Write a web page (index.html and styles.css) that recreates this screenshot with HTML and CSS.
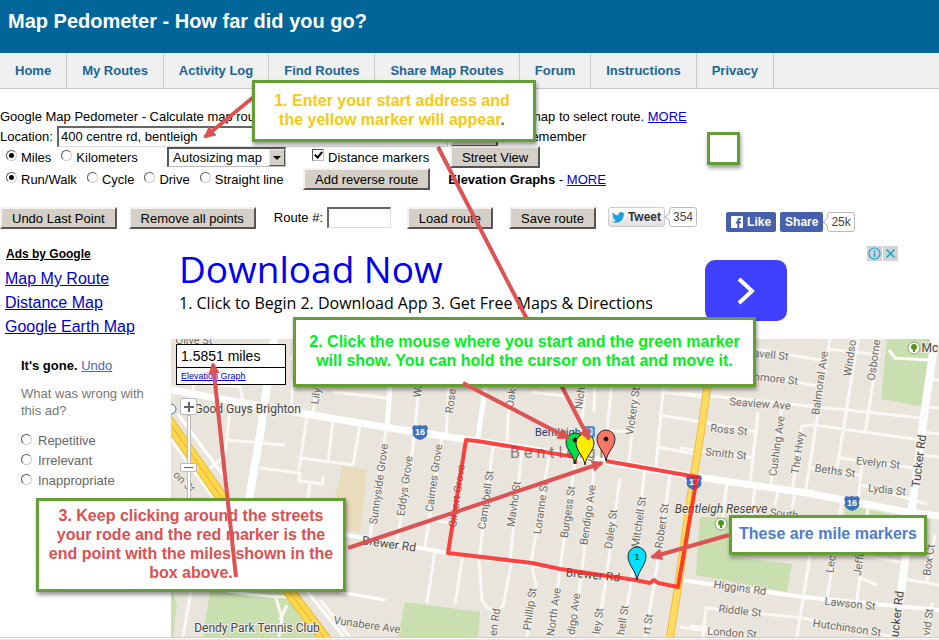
FILE: index.html
```html
<!DOCTYPE html>
<html lang="en">
<head>
  <meta charset="UTF-8">
  <meta name="viewport" content="width=device-width, initial-scale=1.0">
  <title>Map Pedometer - How far did you go?</title>
  <link rel="stylesheet" href="styles.css">
</head>
<body>

<div class="page">
  <header>
    <h1>Map Pedometer - How far did you go?</h1>
  </header>

  <nav>
    <a href="#">Home</a>
    <a href="#">My Routes</a>
    <a href="#">Activity Log</a>
    <a href="#">Find Routes</a>
    <a href="#">Share Map Routes</a>
    <a href="#">Forum</a>
    <a href="#">Instructions</a>
    <a href="#">Privacy</a>
  </nav>

  <form class="controls">
    <div class="row">
      <span class="intro">Google Map Pedometer - Calculate map routes.</span>
      <span>map to select route. <a href="#">MORE</a></span>
    </div>
    <div class="row">
      <label class="location-label" for="location">Location:</label>
      <input type="text" id="location" value="400 centre rd, bentleigh">
      <button type="button" class="find">Find</button>
      <label class="option remember"><input type="checkbox">Remember</label>
    </div>
    <div class="row tall">
      <div class="options units">
        <label class="option"><input type="radio" name="unit" checked>Miles</label>
        <label class="option"><input type="radio" name="unit">Kilometers</label>
      </div>
      <div class="select-box">
        <select aria-label="Map size">
          <option>Autosizing map</option>
        </select>
        <span class="select-arrow"></span>
      </div>
      <label class="option markers"><input type="checkbox" checked>Distance markers</label>
      <button type="button">Street View</button>
    </div>
    <div class="row tall">
      <div class="options modes">
        <label class="option"><input type="radio" name="mode" checked>Run/Walk</label>
        <label class="option"><input type="radio" name="mode">Cycle</label>
        <label class="option"><input type="radio" name="mode">Drive</label>
        <label class="option"><input type="radio" name="mode">Straight line</label>
      </div>
      <button type="button">Add reverse route</button>
      <span class="elevation"><b>Elevation Graphs</b> - <a href="#">MORE</a></span>
    </div>
    <div class="row actions">
      <button type="button">Undo Last Point</button>
      <button type="button">Remove all points</button>
      <label class="route-label" for="route">Route #:</label>
      <input type="text" id="route">
      <button type="button" class="load">Load route</button>
      <button type="button" class="save">Save route</button>
      <button type="button" class="tweet">
        <svg width="13" height="11" viewBox="0 0 24 20"><path fill="#1da1dd" d="M24 2.4a10 10 0 0 1-2.8.8A5 5 0 0 0 23.300.500a10 10 0 0 1-3.100 1.200 4.900 4.900 0 0 0-8.400 4.500A14 14 0 0 1 1.700 1a4.900 4.900 0 0 0 1.500 6.600 5 5 0 0 1-2.200-.6 4.900 4.900 0 0 0 3.900 4.900 5 5 0 0 1-2.200.1 4.900 4.900 0 0 0 4.600 3.400A10 10 0 0 1 0 17.500 14 14 0 0 0 21.500 5.100 10 10 0 0 0 24 2.400z"/></svg>
        Tweet
      </button>
      <span class="count">354</span>
      <div class="facebook">
        <button type="button" class="fb">
          <svg width="12" height="12" viewBox="0 0 12 12"><rect width="12" height="12" rx="1" fill="#fff"/><path fill="#3f5fae" d="M6.300 12V7.400H4.800V5.600h1.500V4.300C6.300 2.700 7.200 2 8.600 2h1.500v1.700H9.200c-.7 0-.9.3-.9.900v1h1.800l-.3 1.800H8.300V12z"/></svg>
          Like
        </button>
        <button type="button" class="fb">Share</button>
        <span class="count">25k</span>
      </div>
    </div>
  </form>

  <div class="content">
    <aside>
      <a class="ads-title" href="#">Ads by Google</a>
      <a href="#">Map My Route</a>
      <a href="#">Distance Map</a>
      <a href="#">Google Earth Map</a>
      <div class="feedback">
        <p class="gone"><b>It's gone.</b> <a href="#">Undo</a></p>
        <p class="question">What was wrong with this ad?</p>
        <label class="option"><input type="radio" name="reason">Repetitive</label>
        <label class="option"><input type="radio" name="reason">Irrelevant</label>
        <label class="option"><input type="radio" name="reason">Inappropriate</label>
      </div>
    </aside>

    <main>
      <div class="banner">
        <div class="banner-text">
          <a class="banner-title" href="#">Download Now</a>
          <p>1. Click to Begin 2. Download App 3. Get Free Maps &amp; Directions</p>
        </div>
        <button type="button" class="banner-go" aria-label="Download">
          <svg width="18" height="28" viewBox="0 0 18 28"><path d="M2 2l13 12L2 26" fill="none" stroke="#fff" stroke-width="4"/></svg>
        </button>
        <div class="ad-icons">
          <svg width="15" height="15" viewBox="0 0 15 15"><rect width="15" height="15" fill="#d0d4d6"/><circle cx="7.500" cy="7.500" r="5.500" fill="none" stroke="#1ba3c6" stroke-width="1.200"/><path d="M7.500 6.500v4.500M7.500 4v1.500" stroke="#1ba3c6" stroke-width="1.500"/></svg>
          <svg width="15" height="15" viewBox="0 0 15 15"><rect width="15" height="15" fill="#d0d4d6"/><path d="M3.500 3.500l8 8M11.500 3.500l-8 8" stroke="#1ba3c6" stroke-width="1.500"/></svg>
        </div>
      </div>

      <div class="map">
        <svg class="map-canvas" viewBox="171 339 768 298" preserveAspectRatio="xMinYMin slice">
          <rect x="171" y="339" width="2000" height="298" fill="#e9e5dc"/>

          <!-- parks -->
          <g fill="#c9dfaf">
            <path d="M887 339h43l-5 68-44-8z"/>
            <path d="M700 517l30 0 0 40 62 7-5 28-91-17z"/>
            <path d="M211 585l82 8 36 44H203z"/>
            <path d="M171 590l6 14-4 33h-2z"/>
            <path d="M405 602l75 10-2 25h-80z"/>
            <path d="M845 505l20 4 25 5v3h-45z"/>
          </g>
          <path d="M343 465l24 5-7 62-32-6z" fill="#e8dcbc"/>

          <!-- small streets -->
          <g class="minor">
            <path d="M452 339L446 436M512 339L507 442M590 339L579 450M596 339L594 412M616 339L605 452M641 339L629 462M668 339L656 466"/>
            <path d="M531 392l34 4M607 430l22 2M660 392l43 5M659 415l42 7M657 447l38 7"/>
            <path d="M317 385L313 414M293 380L291 410M424 339L412 455L396 545M386 430L370 537M442 437L425 547"/>
            <path d="M307 416L299 470M300 458l54 7M360 425L353 466M333 420L328 462M260 468l40 5-1 8 24 3v-8M310 483l-3 20"/>
            <path d="M227 440l58 5M230 410L225 455L210 469M333 392l54 6M171 440l44 60M195 380l-4 20M220 385l20 2 3 14M290 358l22 3"/>
            <path d="M493 446L479 560L482 600Q492 618 503 606L512 560M522 451L510 560M549 457L531 563L536 585L527 637"/>
            <path d="M575 462L560 569L551 637M595 464L582 570L573 637M620 478L607 573L597 637M645 468L632 577L622 637M670 475L655 580L645 637"/>
            <path d="M435 551L427 603M463 555L455 604M430 520l20 3"/>
            <path d="M830 339L805 494M858 339L837 468M880 339L865 434M827 349l54 6M720 343l105 18M720 368l97 18"/>
            <path d="M680 393l62 6 180 19M680 418l78 14M758 412L750 485M680 448l72 10M782 408L770 490M792 492L802 426L814 425L922 440"/>
            <path d="M840 458l73 10M810 468l52 8M862 462L858 503M862 485l65 19M931 379l8 1M926 407l13 1M922 432l17 2M920 455l19 2"/>
            <path d="M727 483L722 520M755 488L751 520M778 490l-3 15M795 493l-3 15M814 530L797 637M842 500L827 600M868 508L857 600M840 551l60 11M860 578l17 7"/>
            <path d="M703 637L706 608L803 618L893 637M680 627l80 12M935 535L927 582M905 579l34 6M932 603l-4 34M690 626l18 2"/>
            <path d="M191 590L183 637M276 598l6 20-3 19M287 605l-7 15M320 600l30 37"/>
          </g>

          <!-- wider streets -->
          <g fill="none" stroke="#fff">
            <path d="M492 339L478 438M394 339L387 426" stroke-width="5"/>
            <path d="M330 532L448 553L560 569L678 587M681 580L803 597L939 610" stroke-width="4"/>
            <path d="M203 585Q240 596 292 597M340 592L385 600" stroke-width="3"/>
            <path d="M274 339L260 435L242 540" stroke-width="8"/>
            <path d="M935 339L925 408L913 500L895 637" stroke-width="8"/>
            <path d="M171 390L300 413L390 428L463 439L603 461L690 476L807 493L907 512L939 516" stroke-width="7"/>
            <path d="M889 350l6 8 34 2" stroke-width="3"/>
          </g>

          <!-- highways -->
          <g fill="none">
            <path d="M178 414L228 482M302 585L344 637" stroke="#fff" stroke-width="3"/>
            <path d="M166 418L222 498L288 590L326 640" stroke="#efb92e" stroke-width="12"/>
            <path d="M166 418L222 498L288 590L326 640" stroke="#ffd84c" stroke-width="10"/>
            <path d="M166 418L222 498L288 590L326 640" stroke="#e8a92c"/>
            <path d="M714 339L701 432L693 480L678 587L670 637" stroke="#f0bb42" stroke-width="8"/>
            <path d="M714 339L701 432L693 480L678 587L670 637" stroke="#ffdb60" stroke-width="6"/>
          </g>

          <!-- street names -->
          <g class="names">
            <text transform="translate(316 396) rotate(-82)">Lily</text>
            <text transform="translate(418 391) rotate(-82)">Wr</text>
            <text transform="translate(451 401) rotate(-82)">Rose</text>
            <text transform="translate(511 398) rotate(-82)">Oak</text>
            <text transform="translate(580 398) rotate(-82)">Nich</text>
            <text transform="translate(633 411) rotate(-82)">Vickery St</text>
            <text transform="translate(820 383) rotate(-82)">Balmoral Ave</text>
            <text transform="translate(850 358) rotate(-82)">Windso</text>
            <text transform="translate(874 360) rotate(-82)">Osborne</text>
            <text transform="translate(777 446) rotate(-82)">Cushing Ave</text>
            <text transform="translate(798 453) rotate(-82)">The Hwy</text>
            <text transform="translate(379 484) rotate(-82)">Sunnyside Grove</text>
            <text transform="translate(405 486) rotate(-82)">Eddys Grove</text>
            <text transform="translate(434 478) rotate(-82)">Cairnes Grove</text>
            <text transform="translate(457 496) rotate(-82)">Gilbert Grove</text>
            <text transform="translate(486 500) rotate(-82)">Campbell St</text>
            <text transform="translate(514 504) rotate(-82)">Mavho St</text>
            <text transform="translate(541 508) rotate(-82)">Loranne St</text>
            <text transform="translate(568 512) rotate(-82)">Burgess St</text>
            <text transform="translate(588 515) rotate(-82)">Bendigo Ave</text>
            <text transform="translate(611 529) rotate(-82)">Daley St</text>
            <text transform="translate(639 522) rotate(-82)">Mitchell St</text>
            <text transform="translate(662 526) rotate(-82)">Robert St</text>
            <text transform="translate(530 609) rotate(-82)">Phillip St</text>
            <text transform="translate(554 612) rotate(-82)">North Ave</text>
            <text transform="translate(574 614) rotate(-82)">digo Ave</text>
            <text transform="translate(598 621) rotate(-82)">ley St</text>
            <text transform="translate(623 620) rotate(-82)">hell St</text>
            <text transform="translate(648 624) rotate(-82)">rt St</text>
            <text transform="translate(495 622) rotate(-82)">en Rd</text>
            <text transform="translate(831 564) rotate(-82)">Lec</text>
            <text transform="translate(859 564) rotate(-82)">Jeffr</text>
            <text transform="translate(929 560) rotate(-82)">Box Ct</text>
            <text transform="translate(928 622) rotate(-82)">vid St</text>
            <text transform="translate(184 482) rotate(45)">on St</text>
            <text transform="translate(194 340)">Olive St</text>
            <text transform="translate(771 355) rotate(6)">avell St</text>
            <text transform="translate(776 379) rotate(6)">hmore St</text>
            <text transform="translate(760 404) rotate(4)">Seaview Ave</text>
            <text transform="translate(729 430) rotate(6)">Ross St</text>
            <text transform="translate(726 454) rotate(6)">Smith St</text>
            <text transform="translate(878 463) rotate(6)">Evelyn St</text>
            <text transform="translate(835 471) rotate(8)">Beths St</text>
            <text transform="translate(887 490) rotate(6)">Lydia St</text>
            <text transform="translate(784 514) rotate(6)">South</text>
            <text transform="translate(740 588) rotate(8)">Higgins Rd</text>
            <text transform="translate(740 611) rotate(6)">Riddle St</text>
            <text transform="translate(732 633) rotate(4)">London St</text>
            <text transform="translate(850 604) rotate(6)">Lawson St</text>
            <text transform="translate(847 628) rotate(8)">Hutchinson St</text>
            <text transform="translate(367 625) rotate(8)">Vunabere Ave</text>
          </g>
          <g class="names dark">
            <text transform="translate(919 461) rotate(-83)">Tucker Rd</text>
            <text transform="translate(897 614) rotate(-83)">ucker Rd</text>
            <text transform="translate(389 544) rotate(8)">Brewer Rd</text>
            <text transform="translate(593 575) rotate(6)">Brewer Rd</text>
            <text class="italic" x="721" y="509">Bentleigh Reserve</text>
            <text x="257" y="628">Dendy Park Tennis Club</text>
            <text x="243" y="409">e Good Guys Brighton</text>
            <text x="930" y="348">Mc</text>
          </g>
          <text class="station" x="535" y="436">Bentleigh</text>
          <text class="suburb" x="510" y="458">B e n t l e i g h</text>
          <rect x="584" y="426" width="11" height="12" rx="2" fill="#5a8fd0"/>
          <path d="M587 429h5v5h-5zM587 436h5" fill="none" stroke="#fff"/>
          <circle cx="171" cy="409" r="5" fill="#fff" stroke="#3b6fc4"/>

          <!-- park signs -->
          <g stroke="#8aa668">
            <circle cx="914" cy="348" r="6" fill="#fff"/>
            <circle cx="721" cy="524" r="6" fill="#fff"/>
            <path d="M914 352v-3M721 528v-3" stroke="#54941b" stroke-width="2"/>
          </g>
          <g fill="#54941b">
            <circle cx="914" cy="347" r="3"/>
            <circle cx="721" cy="523" r="3"/>
          </g>

          <!-- route shields -->
          <g class="shield" transform="translate(420 432)"><path d="M-6-7q3 1.500 6 0 3 1.500 6 0l2 3q-2 3-.5 6-1 4-7.500 6-6.500-2-7.500-6 1.500-3-.5-6z"/><text y="3">16</text></g>
          <g class="shield" transform="translate(852 503)"><path d="M-6-7q3 1.500 6 0 3 1.500 6 0l2 3q-2 3-.5 6-1 4-7.500 6-6.500-2-7.500-6 1.500-3-.5-6z"/><text y="3">16</text></g>
          <g class="shield" transform="translate(694 482)"><path d="M-6-7q3 1.500 6 0 3 1.500 6 0l2 3q-2 3-.5 6-1 4-7.500 6-6.500-2-7.500-6 1.500-3-.5-6z"/><text y="3">17</text></g>

          <!-- walked route -->
          <path d="M575 464v-7L477 441L466 440L448 553L532 563L560 569L635 580L650 583L654 580L658 583L678 587L697 477L606 461" fill="none" stroke="#ff1a1a" stroke-opacity=".82" stroke-width="4" stroke-linejoin="round"/>

          <!-- markers, each drawn from its tip -->
          <g stroke="#222">
            <path fill="#00e04b" transform="translate(575 464)" d="M0 0C-1-9-9-14-9-22A9 9 0 0 1 9-22C9-14 1-9 0 0z"/>
            <circle cx="575" cy="440" r="2"/>
            <path fill="#fd7567" transform="translate(606 461)" d="M0 0C-1-9-9-14-9-22A9 9 0 0 1 9-22C9-14 1-9 0 0z"/>
            <circle cx="606" cy="439" r="2"/>
            <path fill="#ffec00" transform="translate(585 465)" d="M0 0C-1-9-9-14-9-22A9 9 0 0 1 9-22C9-14 1-9 0 0z"/>
            <path fill="#00e1ff" transform="translate(637 580)" d="M0 0C-1-9-9-15-9-24A9 9 0 0 1 9-24C9-15 1-9 0 0z"/>
          </g>
          <text class="mile" x="637" y="560">1</text>
        </svg>

        <div class="distance">
          <div class="miles">1.5851 miles</div>
          <a href="#">Elevation Graph</a>
        </div>
        <div class="zoom">
          <button type="button" aria-label="Zoom in"><svg width="10" height="10" viewBox="0 0 10 10"><path d="M5 0v10M0 5h10" stroke="#666" stroke-width="2"/></svg></button>
          <div class="zoom-track"><span></span></div>
        </div>
      </div>
    </main>
  </div>

  <footer></footer>

  <!-- help notes laid over the page -->
  <svg class="arrows" width="939" height="640">
    <defs>
      <marker id="head" markerUnits="userSpaceOnUse" markerWidth="12" markerHeight="12" refX="10" refY="6" orient="auto"><path d="M0 0l12 6-12 6z" fill="#dd5353"/></marker>
    </defs>
    <path d="M256 95L205 137" marker-end="url(#head)"/>
    <path d="M438 147L589 439" marker-end="url(#head)"/>
  </svg>
  <div class="note note-start">1. Enter your start address and<br>the yellow marker will appear<span>.</span></div>
  <div class="note note-click">2. Click the mouse where you start and the green marker will show. You can hold the cursor on that and move it.</div>
  <div class="note note-route">3. Keep clicking around the streets your rode and the red marker is the end point with the miles shown in the box above.</div>
  <div class="note note-miles">These are mile markers</div>
  <div class="note note-empty"></div>
  <svg class="arrows" width="939" height="640">
    <path d="M236 577L213 364" marker-end="url(#head)"/>
    <path d="M463 383L568 438" marker-end="url(#head)"/>
    <path d="M348 548L602 463" marker-end="url(#head)"/>
    <path d="M729 535L652 557" marker-end="url(#head)"/>
  </svg>
</div>

</body>
</html>
```
FILE: styles.css
```css
body {
  margin: 0;
  background: #fff;
  font-family: "Liberation Sans", Arial, sans-serif;
  font-size: 13px;
  color: #000;
}

a {
  color: #0000cc;
}

p {
  margin: 0;
}

.page {
  position: relative;
  overflow: hidden;
}

header {
  background: #006699;
  padding: 9px 8px 20px;
}

h1 {
  margin: 0;
  font-size: 20px;
  line-height: 24px;
  color: #fff;
}

nav {
  display: flex;
  background: #f0f0f0;
  border-bottom: 1px solid #c8c8c8;
}

nav a {
  padding: 1px 15px 0;
  line-height: 34px;
  border-right: 1px solid #c8c8c8;
  font-weight: bold;
  color: #1a6496;
  text-decoration: none;
}

/* controls */

.controls {
  padding-top: 17px;
}

.row {
  display: flex;
  align-items: center;
  height: 20px;
  white-space: nowrap;
}

.tall {
  height: 22px;
}

.intro {
  width: 530px;
}

input, select, button {
  box-sizing: border-box;
  margin: 0;
  font-family: inherit;
  font-size: 13px;
  color: #000;
}

button {
  height: 22px;
  padding: 0 10px;
  background: #d4d0c8;
  border: 2px solid;
  border-color: #f4f2ee #555 #555 #f4f2ee;
  border-radius: 0;
  white-space: nowrap;
}

input[type="text"] {
  height: 21px;
  padding: 0 2px;
  background: #fff;
  border: 1px solid #ddd;
  border-top: 2px solid #666;
  border-left: 2px solid #666;
}

.location-label {
  width: 57px;
}

#location {
  width: 391px;
}

.find {
  width: 48px;
  margin-left: 2px;
}

.option {
  display: flex;
  align-items: center;
  gap: 4px;
}

.remember {
  margin-left: 8px;
}

input[type="radio"] {
  appearance: none;
  width: 11px;
  height: 11px;
  margin-bottom: 4px;
  border: 1px solid;
  border-color: #555 #ccc #ccc #555;
  border-radius: 50%;
  background: #fff;
}

input[type="radio"]:checked {
  background: radial-gradient(circle, #000 2px, #fff 3px);
}

input[type="checkbox"] {
  appearance: none;
  width: 12px;
  height: 12px;
  margin-bottom: 4px;
  border: 1px solid;
  border-color: #555 #bbb #bbb #555;
  background: #fff;
}

input[type="checkbox"]:checked::before {
  content: "";
  display: block;
  width: 3px;
  height: 6px;
  margin: 0 0 0 3px;
  border: solid #000;
  border-width: 0 2px 2px 0;
  transform: rotate(40deg);
}

.options {
  display: flex;
  gap: 10px;
  padding-left: 6px;
  box-sizing: border-box;
}

.units {
  width: 167px;
}

.modes {
  width: 303px;
}

.select-box {
  position: relative;
}

select {
  appearance: none;
  width: 119px;
  height: 20px;
  padding: 0 4px;
  background: #fff;
  border: 1px solid #bbb;
  border-top: 2px solid #555;
  border-left: 2px solid #555;
  border-radius: 0;
}

.select-arrow {
  position: absolute;
  top: 2px;
  right: 1px;
  width: 16px;
  height: 17px;
  box-sizing: border-box;
  background: #d4d0c8;
  border: 1px solid;
  border-color: #eee #555 #555 #eee;
  pointer-events: none;
}

.select-arrow::before {
  content: "";
  position: absolute;
  top: 6px;
  left: 3px;
  border: 4px solid transparent;
  border-top-color: #000;
  border-bottom: 0;
}

.markers {
  width: 138px;
  margin-left: 26px;
}

.elevation {
  margin-left: 18px;
}

.actions {
  align-items: flex-start;
  height: auto;
  margin-top: 17px;
}

.actions button + button {
  margin-left: 12px;
}

.route-label {
  width: 53px;
  margin-left: 18px;
  line-height: 22px;
}

#route {
  width: 64px;
}

.actions .load, .actions .save {
  margin-left: 16px;
}

.actions .tweet {
  display: flex;
  align-items: center;
  gap: 3px;
  height: 20px;
  padding: 0 3px;
  border: 1px solid #ccc;
  border-radius: 3px;
  background: linear-gradient(#fff, #e0e0e0);
  font-size: 12px;
  font-weight: bold;
  color: #333;
}

.count {
  position: relative;
  height: 18px;
  margin-left: 4px;
  padding: 0 3px;
  border: 1px solid #bbb;
  border-radius: 3px;
  background: #fff;
  line-height: 18px;
  font-size: 12px;
  color: #444;
}

.count::before {
  content: "";
  position: absolute;
  top: 6px;
  left: -4px;
  width: 5px;
  height: 5px;
  border: solid #bbb;
  border-width: 0 0 1px 1px;
  background: #fff;
  transform: rotate(45deg);
}

.facebook {
  display: flex;
  margin: 5px 0 0 29px;
}

.facebook .fb {
  display: flex;
  align-items: center;
  gap: 4px;
  height: 20px;
  padding: 0 5px;
  border: 0;
  border-radius: 2px;
  background: #4560ad;
  font-size: 12px;
  font-weight: bold;
  color: #fff;
}

.facebook .fb + .fb {
  margin-left: 4px;
}

/* ads column */

.content {
  display: flex;
  margin-top: 14px;
}

aside {
  flex: none;
  width: 171px;
  box-sizing: border-box;
  padding-left: 5px;
}

aside > a {
  display: block;
  width: fit-content;
  font-size: 16px;
  line-height: 24px;
}

aside .ads-title {
  margin: 0 1px 5px;
  font-size: 12px;
  font-weight: bold;
  line-height: 16px;
  color: #000;
}

.feedback {
  padding: 19px 20px 0 16px;
  color: #666;
}

.feedback .option {
  gap: 6px;
  line-height: 20px;
}

.gone {
  margin-bottom: 11px;
  line-height: 16px;
  color: #000;
}

.gone a {
  color: #4466bb;
}

.question {
  margin-bottom: 12px;
  line-height: 17px;
  color: #777;
}

/* banner */

main {
  flex: 1;
  min-width: 0;
}

.banner {
  display: flex;
  height: 93px;
}

.banner-text {
  width: 534px;
  padding-left: 8px;
  box-sizing: border-box;
  font-family: "Open Sans", sans-serif;
  white-space: nowrap;
}

.banner-title {
  display: block;
  font-size: 37px;
  line-height: 46px;
  color: #0000ee;
  text-decoration: none;
}

.banner-text p {
  font-size: 16px;
  line-height: 22px;
}

.banner-go {
  width: 82px;
  height: 61px;
  margin-top: 14px;
  padding: 0;
  border: 0;
  border-radius: 10px;
  background: #4040ff;
}

.banner-go svg {
  vertical-align: middle;
}

.ad-icons {
  display: flex;
  gap: 1px;
  margin: 0 41px 0 auto;
}

/* map */

.map {
  position: relative;
  height: 298px;
  overflow: hidden;
}

.map-canvas {
  display: block;
  width: 100%;
  height: 100%;
}

.minor {
  fill: none;
  stroke: #faf8f4;
  stroke-width: 3px;
}

.names {
  font-family: Roboto, sans-serif;
  font-size: 11px;
  text-anchor: middle;
  dominant-baseline: central;
  fill: #6c6a66;
  stroke: #f3f0ea;
  stroke-width: 2px;
  paint-order: stroke;
}

.dark {
  font-size: 12px;
  fill: #484644;
}

.italic {
  font-style: italic;
}

.station {
  font-family: Roboto, sans-serif;
  font-size: 11px;
  fill: #23406b;
}

.suburb {
  font-family: Roboto, sans-serif;
  font-size: 16px;
  fill: #8d7b70;
}

.shield {
  fill: #3c70c0;
}

.shield text {
  fill: #fff;
  font-size: 9px;
  font-weight: bold;
  text-anchor: middle;
}

.mile {
  font-size: 9px;
  text-anchor: middle;
}

.distance {
  position: absolute;
  top: 5px;
  left: 5px;
  width: 108px;
  border: 1px solid #000;
  background: #fff;
}

.distance .miles {
  padding-left: 4px;
  border-bottom: 1px solid #000;
  font-size: 14px;
  line-height: 22px;
}

.distance a {
  display: block;
  padding-left: 4px;
  font-size: 9px;
  line-height: 16px;
}

.zoom {
  position: absolute;
  top: 59px;
  left: 9px;
  width: 17px;
}

.zoom button {
  display: flex;
  align-items: center;
  justify-content: center;
  width: 17px;
  height: 17px;
  padding: 0;
  border: 1px solid #bbb;
  border-radius: 2px;
  background: #fff;
}

.zoom-track {
  width: 2px;
  height: 100px;
  margin: 0 auto;
  padding-top: 47px;
  border: 1px solid #bbb;
  background: #fff;
}

.zoom-track span {
  display: block;
  width: 15px;
  height: 7px;
  margin-left: -8px;
  border: 1px solid #bbb;
  border-radius: 2px;
  background: linear-gradient(#666, #666) center / 9px 1px no-repeat #fff;
}

footer {
  height: 1px;
  border-top: 1px solid #ccc;
  border-bottom: 1px solid #e4e4e4;
}

/* help notes */

.arrows {
  position: absolute;
  top: 0;
  left: 0;
  fill: none;
  stroke: #dd5353;
  stroke-width: 4px;
  pointer-events: none;
}

.arrows marker {
  stroke: none;
}

.note {
  position: absolute;
  box-sizing: border-box;
  border: 3px solid #639f33;
  background: #fff;
  box-shadow: 1px 3px 4px rgba(0, 0, 0, 0.4);
  font-size: 16px;
  font-weight: bold;
  line-height: 19px;
  text-align: center;
}

.note-start {
  top: 80px;
  left: 252px;
  width: 284px;
  height: 62px;
  padding: 8px 4px 0 0;
  color: #f7c912;
}

.note-start span {
  color: #8a6d1c;
}

.note-click {
  top: 317px;
  left: 293px;
  width: 463px;
  height: 70px;
  padding: 12px 8px 0;
  color: #00f01c;
}

.note-route {
  top: 498px;
  left: 36px;
  width: 310px;
  height: 94px;
  padding: 5px 8px 0;
  color: #dd5050;
}

.note-miles {
  top: 515px;
  left: 729px;
  width: 198px;
  height: 40px;
  padding-top: 6px;
  color: #4f7ccb;
}

.note-empty {
  top: 132px;
  left: 707px;
  width: 33px;
  height: 33px;
}
```
